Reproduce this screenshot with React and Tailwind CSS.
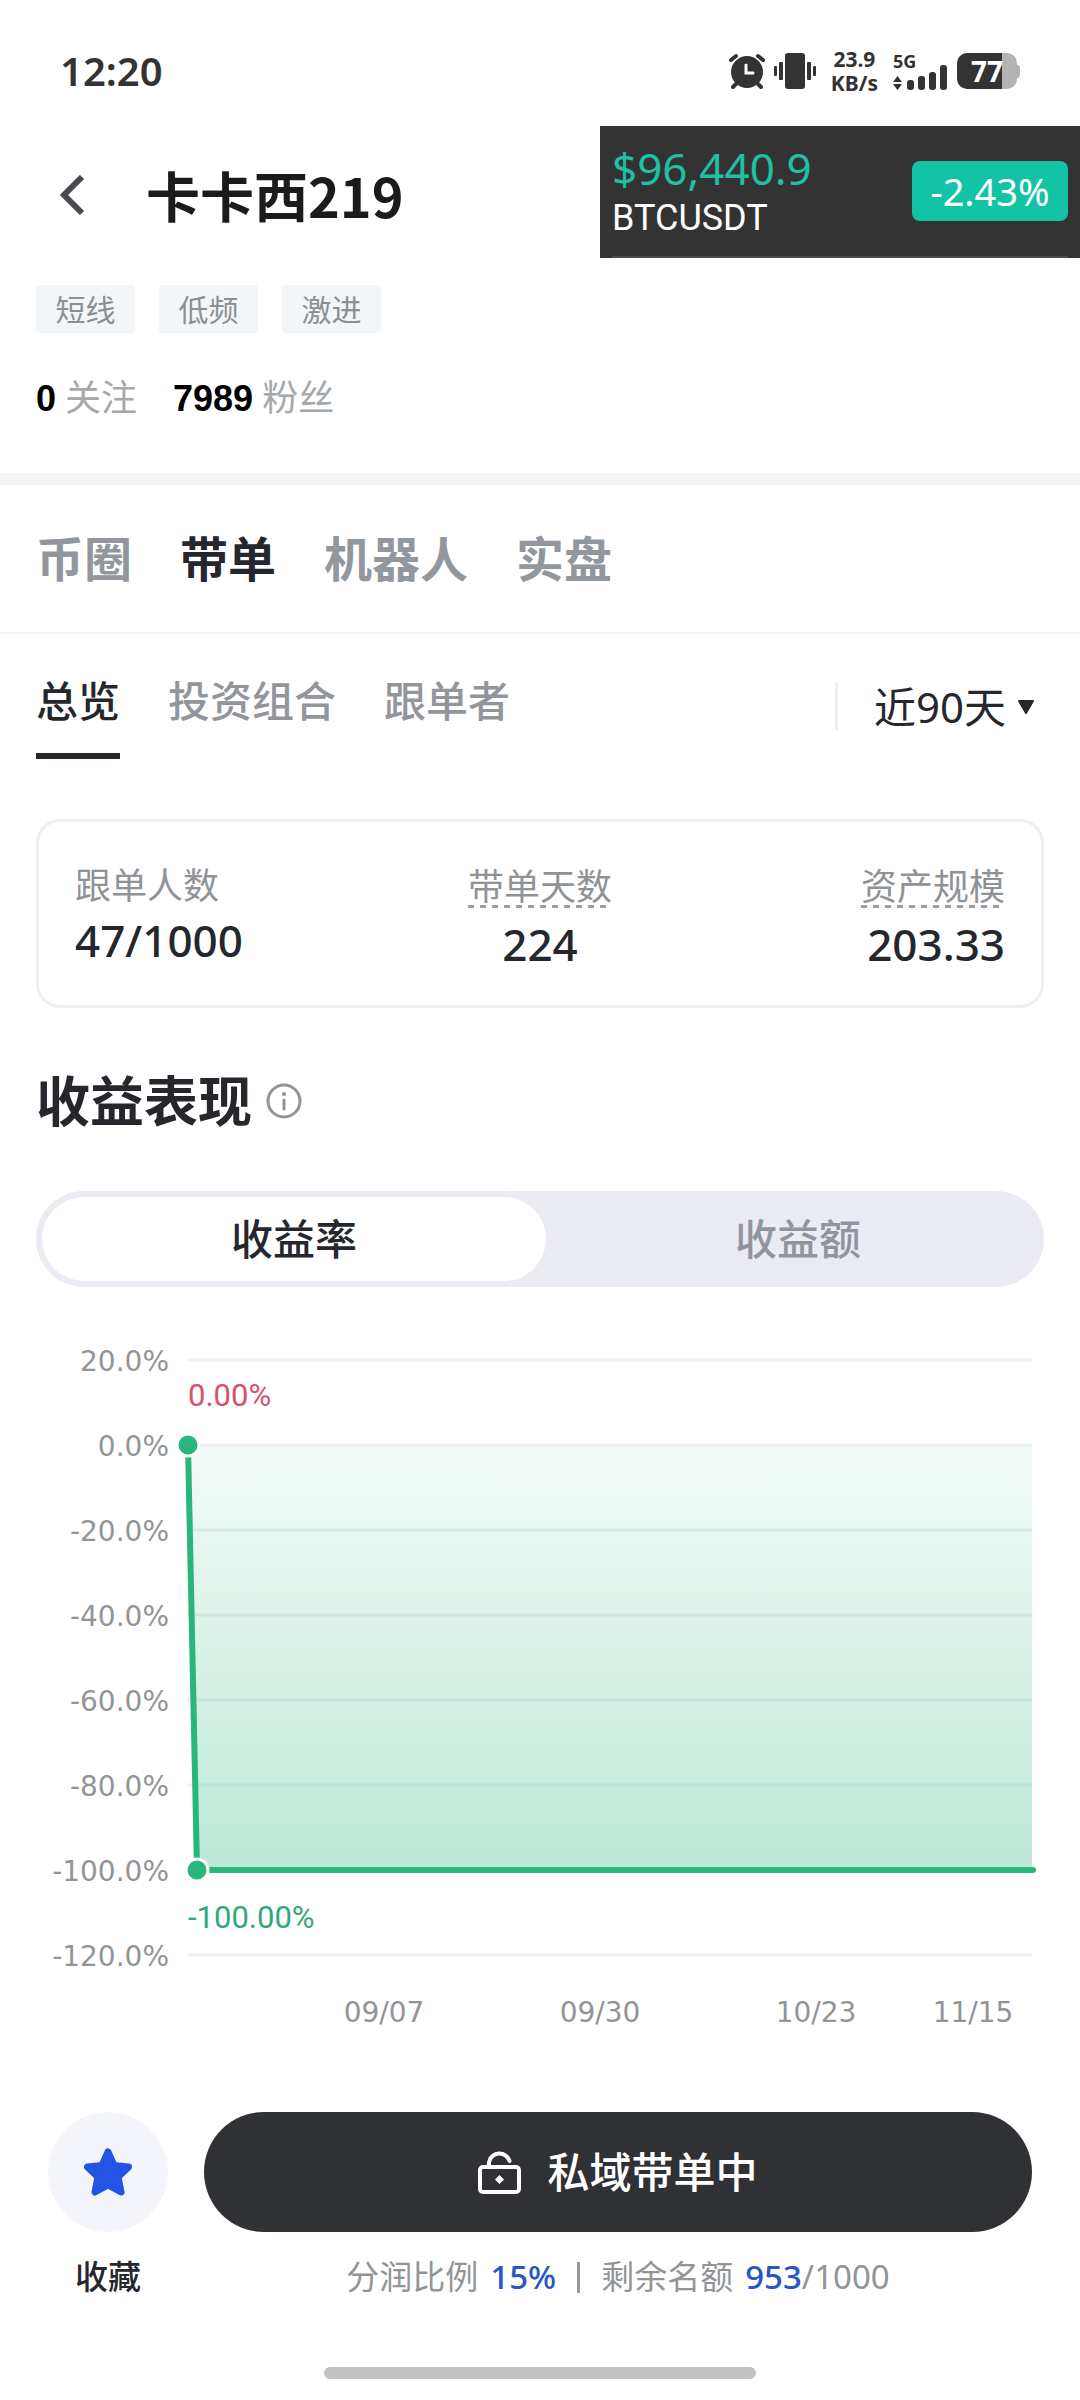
import { useState } from 'react';
import clsx from 'clsx';

const tags = ['短线', '低频', '激进'];

const mainTabs = ['币圈', '带单', '机器人', '实盘'];

const subTabs = ['总览', '投资组合', '跟单者'];

const yTicks = ['20.0%', '0.0%', '-20.0%', '-40.0%', '-60.0%', '-80.0%', '-100.0%', '-120.0%'];

const xTicks = [
  { label: '09/07', x: 384 },
  { label: '09/30', x: 600 },
  { label: '10/23', x: 816 },
  { label: '11/15', x: 973 }
];

const gridY = (i) => 73 + i * 85;

function StatusBar() {
  return (
    <div className="flex h-[126px] items-center justify-between pt-[16px] pr-[60px] pl-[60px] text-[#333333]">
      <span className="text-[40px] leading-[48px] font-semibold">12:20</span>
      <div className="flex items-center">
        <svg width="38" height="36" viewBox="0 0 38 36" fill="none" stroke="#333333" strokeWidth="4" strokeLinecap="round">
          <circle cx="19" cy="19" r="16" fill="#333333" stroke="none" />
          <path d="M3 7 8 3M35 7l-5-4M8 31l-3 3M30 31l3 3" />
          <path d="M18 12v8h7" stroke="#ffffff" strokeWidth="3" />
        </svg>
        <svg className="ml-[8px]" width="42" height="36" viewBox="0 0 42 36" fill="#333333">
          <rect x="11" width="20" height="36" rx="3" />
          <rect x="5" y="9" width="4" height="18" rx="1" />
          <rect y="13" width="3" height="10" rx="1" />
          <rect x="33" y="9" width="4" height="18" rx="1" />
          <rect x="39" y="13" width="3" height="10" rx="1" />
        </svg>
        <p className="ml-[15px] text-center text-[21px] leading-[24px] font-bold">
          23.9
          <br />
          KB/s
        </p>
        <div className="ml-[15px] w-[54px]">
          <div className="text-[18px] leading-[18px] font-bold">5G</div>
          <svg className="-mt-[6px]" width="54" height="26" viewBox="0 0 54 26" fill="#333333">
            <path d="M4.500 12 9 18H0zM4.500 26 9 20H0z" />
            <rect x="14" y="16" width="7" height="10" rx="3" />
            <rect x="25" y="12" width="7" height="14" rx="3" />
            <rect x="36" y="8" width="7" height="18" rx="3" />
            <rect x="47" y="1" width="7" height="25" rx="3" />
          </svg>
        </div>
        <div className="ml-[10px] flex items-center">
          <div className="flex h-[36px] w-[60px] items-center justify-center rounded-[10px] bg-linear-to-r from-[#333333] from-75% to-[#b3b3b3] to-75% text-[28px] font-bold text-white">
            77
          </div>
          <div className="h-[13px] w-[3px] rounded-r-[3px] bg-[#b3b3b3]" />
        </div>
      </div>
    </div>
  );
}

function Ticker() {
  return (
    <aside className="h-[132px] w-[480px] bg-[#333333] px-[12px]">
      <div className="flex h-full items-center justify-between border-b-2 border-[#4a4a4a]">
        <div className="pt-[4px]">
          <p className="text-[44px] leading-[50px] text-[#1fc0a3]">$96,440.9</p>
          <p className="font-[Roboto] text-[36px] leading-[50px] text-white">BTCUSDT</p>
        </div>
        <div className="flex h-[60px] w-[156px] items-center justify-center rounded-[8px] bg-[#13c3a6] text-[38px] text-white">
          -2.43%
        </div>
      </div>
    </aside>
  );
}

function Header() {
  return (
    <header className="flex h-[132px] items-center justify-between">
      <div className="flex items-center gap-[60px] pt-[6px] pl-[58px]">
        <button type="button" aria-label="返回">
          <svg width="28" height="40" viewBox="0 0 28 40" fill="none" stroke="#4a4b50" strokeWidth="6">
            <path d="M24 2 6 20 24 38" />
          </svg>
        </button>
        <h1 className="font-['Noto_Sans_CJK_SC',sans-serif] text-[54px] leading-[64px] font-bold text-[#1a1c1c]">
          卡卡西219
        </h1>
      </div>
      <Ticker />
    </header>
  );
}

function Profile() {
  return (
    <section className="border-b-[12px] border-[#f2f5f7] px-[36px] pt-[27px] pb-[49px]">
      <ul className="flex gap-[24px]">
        {tags.map((tag) => (
          <li key={tag} className="flex h-[48px] w-[99px] items-center justify-center rounded-[4px] bg-[#f3f6f8] text-[30px] text-[#8c8f91]">
            {tag}
          </li>
        ))}
      </ul>
      <div className="mt-[40px] flex gap-[36px] text-[36px] leading-[50px] text-[#a5a8aa]">
        <p className="flex items-baseline gap-[9px]">
          <b className="font-['Liberation_Sans'] text-black">0</b>
          <span>关注</span>
        </p>
        <p className="flex items-baseline gap-[9px]">
          <b className="font-['Liberation_Sans'] text-black">7989</b>
          <span>粉丝</span>
        </p>
      </div>
    </section>
  );
}

function MainTabs() {
  const [active, setActive] = useState('带单');

  return (
    <nav className="flex h-[149px] items-center gap-[48px] border-b-2 border-[#f4f5f6] px-[36px]">
      {mainTabs.map((tab) => (
        <button
          key={tab}
          type="button"
          onClick={() => setActive(tab)}
          className={clsx('text-[48px] leading-[64px] font-bold', tab === active ? 'text-[#26272e]' : 'text-[#92969d]')}
        >
          {tab}
        </button>
      ))}
    </nav>
  );
}

function SubTabs() {
  const [active, setActive] = useState('总览');

  return (
    <div className="flex items-start justify-between px-[36px] pt-[43px]">
      <div className="flex gap-[48px]">
        {subTabs.map((tab) => (
          <button
            key={tab}
            type="button"
            onClick={() => setActive(tab)}
            className={clsx(
              'border-b-[6px] pb-[28px] text-[42px] leading-[48px] font-medium',
              tab === active ? 'border-[#25272c] text-[#25272c]' : 'border-transparent text-[#92969b]'
            )}
          >
            {tab}
          </button>
        ))}
      </div>
      <label className="mt-[6px] flex h-[48px] items-center border-l-[3px] border-[#eeeff0] pr-[9px] pl-[36px]">
        <select aria-label="时间范围" className="appearance-none text-[42px] leading-[48px] text-[#25272c]">
          <option>近90天</option>
        </select>
        <svg className="ml-[10px]" width="18" height="16" viewBox="0 0 18 16" fill="#25272c" stroke="#25272c" strokeWidth="2" strokeLinejoin="round">
          <path d="M2 2h14L9 14z" />
        </svg>
      </label>
    </div>
  );
}

const hintLabel =
  'h-[46px] bg-[repeating-linear-gradient(to_right,#9a9c9f_0_6px,transparent_6px_12px)] bg-[length:100%_3px] bg-bottom bg-no-repeat text-[36px] leading-[50px] text-[#909396]';

function Stats() {
  return (
    <dl className="mx-[36px] mt-[60px] grid h-[189px] grid-cols-3 rounded-[24px] border-[3px] border-[#eeeff0] px-[36px] pt-[40px] text-[#25272c]">
      <div className="flex flex-col items-start">
        <dt className="h-[46px] text-[36px] leading-[48px] text-[#909396]">跟单人数</dt>
        <dd className="mt-[8px] text-[44px] leading-[48px] font-medium">47/1000</dd>
      </div>
      <div className="flex flex-col items-center">
        <dt className={hintLabel}>带单天数</dt>
        <dd className="mt-[12px] text-[44px] leading-[48px] font-medium">224</dd>
      </div>
      <div className="flex flex-col items-end">
        <dt className={hintLabel}>资产规模</dt>
        <dd className="mt-[12px] text-[44px] leading-[48px] font-medium">203.33</dd>
      </div>
    </dl>
  );
}

function ModeSwitch() {
  const [mode, setMode] = useState('收益率');

  return (
    <div className="mx-[36px] mt-[58px] overflow-hidden rounded-full bg-[#ebecf3] py-[6px]">
      <div className="-mr-[6px] ml-[6px] grid h-[84px] grid-cols-2">
        {['收益率', '收益额'].map((item) => (
          <button
            key={item}
            type="button"
            onClick={() => setMode(item)}
            className={clsx('rounded-full text-[42px] leading-[48px] font-medium', item === mode ? 'bg-white text-[#25272c]' : 'text-[#90959d]')}
          >
            {item}
          </button>
        ))}
      </div>
    </div>
  );
}

function ProfitChart() {
  return (
    <svg className="block w-full" viewBox="0 0 1080 760">
      <defs>
        <linearGradient id="profit" x1="0" y1="0" x2="0" y2="1">
          <stop offset="0" stopColor="#28b67d" stopOpacity="0.05" />
          <stop offset="1" stopColor="#28b67d" stopOpacity="0.31" />
        </linearGradient>
      </defs>

      {yTicks.map((label, i) => (
        <g key={label}>
          <line x1="188" x2="1032" y1={gridY(i)} y2={gridY(i)} stroke="#eff0f3" strokeWidth="3" />
          <text x="169" y={gridY(i) + 11} textAnchor="end" className="fill-[#929497] font-['DejaVu_Sans'] text-[28px]">
            {label}
          </text>
        </g>
      ))}

      <path d="M188 158H1032V583H197z" fill="url(#profit)" />
      <path d="M188 158 197 583H1033" fill="none" stroke="#28b67d" strokeWidth="6" strokeLinecap="round" strokeLinejoin="round" />
      <circle cx="188" cy="158" r="11" fill="#28b67d" stroke="#ffffff" strokeWidth="3" />
      <circle cx="197" cy="583" r="11" fill="#28b67d" stroke="#ffffff" strokeWidth="3" />

      <text x="188" y="119" className="fill-[#d8506a] font-[Roboto] text-[31px]">0.00%</text>
      <text x="188" y="641" className="fill-[#30a97a] font-[Roboto] text-[31px]">-100.00%</text>

      {xTicks.map(({ label, x }) => (
        <text key={label} x={x} y="735" textAnchor="middle" className="fill-[#929497] font-['DejaVu_Sans'] text-[28px]">
          {label}
        </text>
      ))}
    </svg>
  );
}

function Footer() {
  return (
    <footer className="mt-[65px]">
      <div className="flex gap-[36px] px-[48px] text-[33px] leading-[48px]">
        <button type="button" className="flex w-[120px] flex-col items-center font-medium text-[#25272c]">
          <span className="flex h-[120px] w-[120px] items-center justify-center rounded-full bg-[#f3f5fa]">
            <svg width="48" height="48" viewBox="0 0 48 48" fill="#2354e6" stroke="#2354e6" strokeWidth="7" strokeLinejoin="round">
              <path d="M24 4 30 17.500 44.500 19 34 29 37 44 24 37 11 44 14 29 3.500 19 18 17.500z" />
            </svg>
          </span>
          <span className="mt-[21px]">收藏</span>
        </button>
        <div className="flex flex-1 flex-col items-center">
          <button type="button" className="flex h-[120px] w-full items-center justify-center gap-[26px] rounded-full bg-[#303134] text-[42px] font-medium text-white">
            <svg width="43" height="44" viewBox="0 0 43 44" fill="none" stroke="#ffffff" strokeWidth="4" strokeLinecap="round" strokeLinejoin="round">
              <rect x="2" y="17" width="39" height="25" rx="3" />
              <path d="M11 17v-4.500a10.500 10.500 0 0 1 20.500-1.500" />
              <path d="M21.500 25 26 29.500 21.500 34 17 29.500z" fill="#ffffff" stroke="none" />
            </svg>
            私域带单中
          </button>
          <p className="mt-[21px] flex items-center text-[#929598]">
            分润比例
            <b className="ml-[12px] font-medium text-[#2a55c4]">15%</b>
            <span className="mx-[21px] h-[31px] w-[3px] bg-[#97999c]" />
            剩余名额
            <b className="ml-[12px] font-medium text-[#2a55c4]">953</b>
            <span>/1000</span>
          </p>
        </div>
      </div>
      <div className="mx-auto mt-[66px] mb-[21px] h-[12px] w-2/5 rounded-full bg-[#c2c2c2]" />
    </footer>
  );
}

export default function App() {
  return (
    <div className="min-h-screen w-full bg-white font-['Noto_Sans','Noto_Sans_CJK_SC',sans-serif]">
      <StatusBar />
      <Header />
      <Profile />
      <main>
        <MainTabs />
        <SubTabs />
        <Stats />
        <div className="mt-[61px] flex items-center gap-[14px] px-[36px]">
          <h2 className="text-[54px] leading-[64px] font-bold text-[#25272c]">收益表现</h2>
          <svg width="36" height="36" viewBox="0 0 36 36" fill="none" stroke="#929497" strokeWidth="3" strokeLinecap="round">
            <circle cx="18" cy="18" r="16" />
            <path d="M18 17v9" />
            <circle cx="18" cy="11" r="2" fill="#929497" stroke="none" />
          </svg>
        </div>
        <ModeSwitch />
        <ProfitChart />
      </main>
      <Footer />
    </div>
  );
}
